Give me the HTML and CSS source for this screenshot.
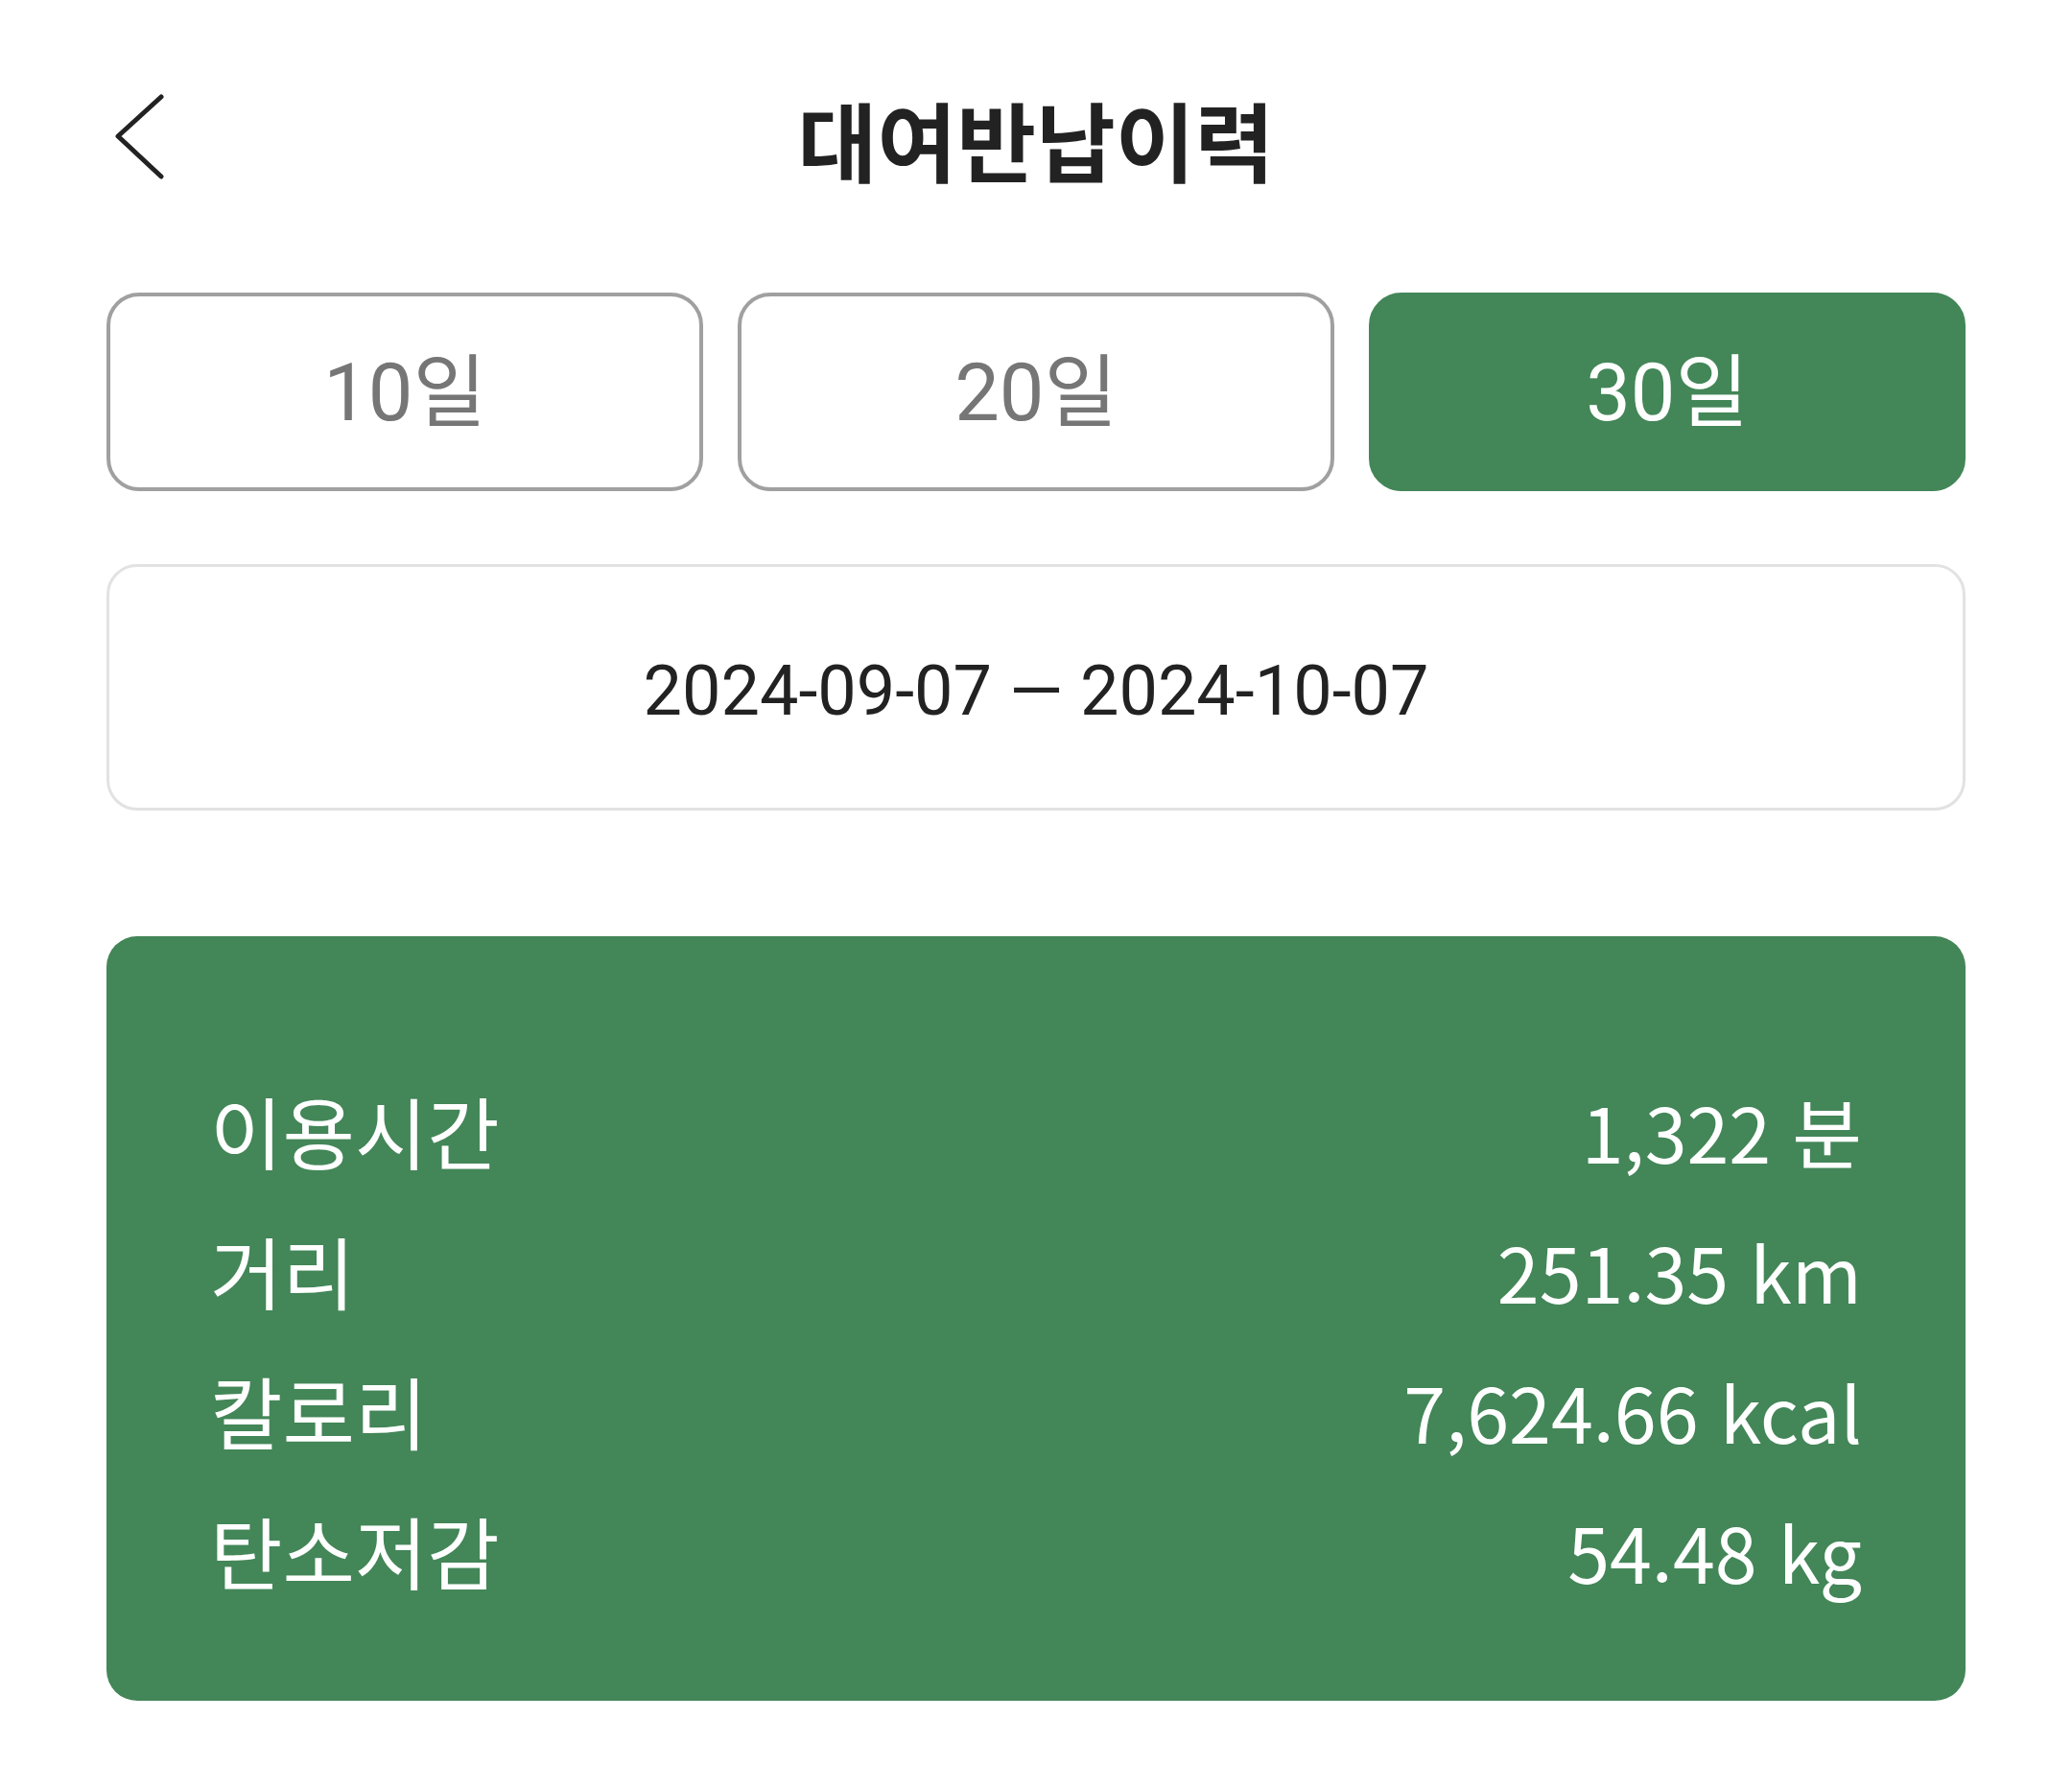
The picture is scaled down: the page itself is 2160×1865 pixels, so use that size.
FILE: index.html
```html
<!DOCTYPE html>
<html lang="ko">
<head>
<meta charset="utf-8">
<title>대여반납이력</title>
<link rel="stylesheet" href="styles.css">
</head>
<body>
<div class="page">
  <header class="header">
    <div class="back">
      <svg class="back-icon" viewBox="0 0 56 90" width="56" height="90">
        <polyline points="51,4 6,45 51,87" fill="none" stroke="#222" stroke-width="5" stroke-linecap="round" stroke-linejoin="round"/>
      </svg>
    </div>
    <h1 class="title"><span class="title-text">대여반납이력</span></h1>
    <div></div>
  </header>

  <div class="periods">
    <button class="period">10일</button>
    <button class="period">20일</button>
    <button class="period active">30일</button>
  </div>

  <div class="range">2024-09-07 — 2024-10-07</div>

  <section class="summary">
    <div class="row"><span class="label">이용시간</span><span class="value">1,322 분</span></div>
    <div class="row"><span class="label">거리</span><span class="value">251.35 km</span></div>
    <div class="row"><span class="label">칼로리</span><span class="value">7,624.66 kcal</span></div>
    <div class="row"><span class="label">탄소저감</span><span class="value">54.48 kg</span></div>
  </section>
</div>
</body>
</html>
```

FILE: styles.css
```css
html, body {
  margin: 0;
  padding: 0;
  background: #ffffff;
}

body {
  font-family: "Noto Sans CJK KR", "Noto Sans", sans-serif;
  color: #222222;
}

.page {
  padding: 0 111px;
}

.header {
  height: 300px;
  display: grid;
  grid-template-columns: 1fr auto 1fr;
  align-items: center;
  margin-bottom: 5px;
}

.back {
  display: flex;
  align-items: center;
  padding-left: 6px;
  margin-top: -16px;
}

.back-icon {
  display: block;
}

.title {
  margin: 0 0 12px 0;
  font-size: 90px;
  font-weight: 700;
  line-height: 1;
  color: #222222;
  text-align: center;
}

.title-text {
  display: inline-block;
}

.periods {
  display: grid;
  grid-template-columns: repeat(3, 1fr);
  gap: 36px;
}

.period {
  height: 207px;
  border: 4px solid #a0a0a0;
  border-radius: 34px;
  background: #ffffff;
  color: #767676;
  font-family: Roboto, "Noto Sans CJK KR", sans-serif;
  font-size: 83px;
  font-weight: 400;
  padding: 0 0 13px 0;
}

.period.active {
  background: #438658;
  border-color: #438658;
  color: #ffffff;
}

.range {
  margin-top: 76px;
  height: 257px;
  box-sizing: border-box;
  border: 3px solid #e2e2e2;
  border-radius: 32px;
  display: flex;
  align-items: center;
  justify-content: center;
  font-family: Roboto, "Noto Sans CJK KR", sans-serif;
  font-size: 72px;
  color: #222222;
  padding-top: 7px;
}

.summary {
  margin-top: 131px;
  height: 797px;
  box-sizing: border-box;
  background: #438658;
  border-radius: 32px;
  padding: 129px 108px 84px 108px;
  color: #ffffff;
}

.row {
  display: flex;
  justify-content: space-between;
  align-items: center;
  height: 146px;
  line-height: 1;
}

.label {
  display: inline-block;
  font-size: 82px;
}

.value {
  display: inline-block;
  font-size: 79px;
}
```
